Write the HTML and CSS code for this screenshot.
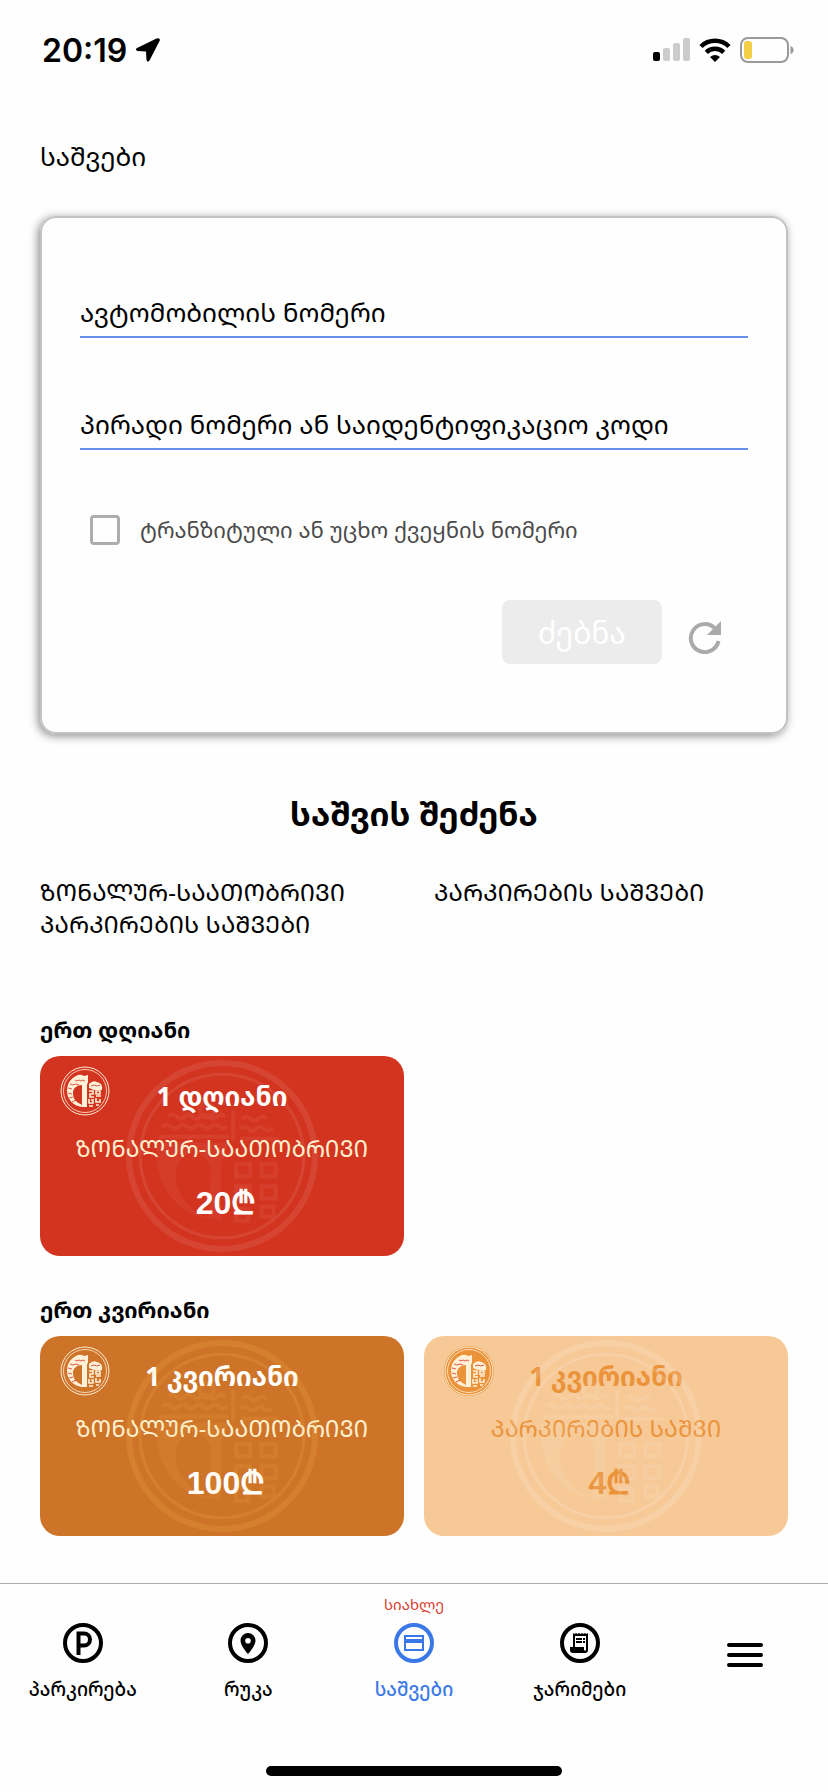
FILE: index.html
```html
<!DOCTYPE html>
<html lang="ka">
<head>
<meta charset="utf-8">
<meta name="viewport" content="width=device-width, initial-scale=1">
<title>საშვები</title>
<link rel="stylesheet" href="styles.css">
</head>
<body>
<svg class="defs" aria-hidden="true">
  <symbol id="emblem" viewBox="0 0 50 50">
    <g fill="none" stroke="currentColor">
      <circle cx="25" cy="25" r="24"/>
      <circle cx="25" cy="25" r="21.500" stroke-width="0.8"/>
    </g>
    <path fill="currentColor" fill-rule="evenodd" d="M16 10q3-2 6-1l2 1 4-1v7l-1 3v22h-5C13 40 7 33 7 25c0-7 3-12 9-15zm6 9c-5 0-9 3-9 8 0 6 3 9 9 12z"/>
    <path fill="currentColor" d="M29 18q4-4 8-2 6 1 5 8h-8l-5-2z"/>
    <path class="carving" fill="none" stroke-width="0.8" d="m15 14 2 1 2-1 2 1 2-1 2 1M10 18l3 1 3-1 3 1M8 22l4 1M8 27l4 1M9 32l4-1M12 36l4-2M31 20l3-1 3 1 3-1"/>
    <path fill="none" stroke="currentColor" stroke-width="1.600" d="M29 25h4v3h-3v3h4M36 25h4v3h-4zM36 30h5M29 33v4h4v-3h-2M36 32v4h4v-3M29 40h4M36 39h3"/>
  </symbol>
  <symbol id="watermark" viewBox="0 0 190 190">
    <g fill="none" stroke="currentColor">
      <circle cx="95" cy="95" r="92" stroke-width="6"/>
      <circle cx="95" cy="95" r="81" stroke-width="3"/>
    </g>
    <g fill="none" stroke="currentColor" stroke-width="4" opacity="0.7">
      <path d="M42 56q4-4 8 0t8 0 8 0 8 0 8 0 8 0 8 0M36 66q4-4 8 0t8 0 8 0 8 0 8 0 8 0 8 0 8 0M32 76h70M115 58q4-4 8 0t8 0 8 0M113 68q4-4 8 0t8 0 8 0 8 0M113 78h38"/>
      <circle cx="80" cy="50" r="7"/>
      <path d="M106 50v30"/>
      <path d="M109 103h14v12h-14zM134 103h14v12h-14zM109 125h14v12h-14zM134 125h14v12h-14zM109 147h12v12h-12zM134 145h12v10h-12z"/>
    </g>
    <path fill="currentColor" fill-rule="evenodd" opacity="0.6" d="M30 82h72l-8 20v56q-40 0-58-36-7-20-6-40zm34 8q-24 16-10 44 12 18 28 22l2-48q-2-14-20-18z"/>
  </symbol>
</svg>
<div class="screen">
  <header class="status">
    <div class="status-time">
      <span>20:19</span>
      <svg width="26" height="26" viewBox="0 0 26 26" aria-hidden="true"><path d="M21.500 1.500 2 11q-2.500 2 .5 3l8.500.5.500 8.500q1 3 3 .5L24.800 3.500q.6-3.200-3.300-2z"/></svg>
    </div>
    <div class="status-icons">
      <svg width="37" height="24" viewBox="0 0 37 24" aria-hidden="true"><rect x="0" y="14" width="7" height="9" rx="2"/><g fill="#cccccc"><rect x="10" y="10" width="7" height="13" rx="2"/><rect x="20" y="5" width="7" height="18" rx="2"/><rect x="30" y="0" width="7" height="23" rx="2"/></g></svg>
      <svg width="32" height="24" viewBox="0 0 32 24" aria-hidden="true"><g fill="none" stroke="#000" stroke-width="4.500"><path d="M2 8.500a20 20 0 0 1 28 0"/><path d="M7.300 14.300a12.500 12.500 0 0 1 17.400 0"/></g><path d="M11 19q5-4 10 0l-5 5z"/></svg>
      <svg width="54" height="26" viewBox="0 0 54 26" aria-hidden="true"><rect x="1" y="1" width="47" height="24" rx="7" fill="none" stroke="#999" stroke-width="2"/><rect x="4" y="4" width="8" height="18" rx="3" fill="#f4ce46"/><path fill="#999" d="M50.500 9q3 1 3 4t-3 4z"/></svg>
    </div>
  </header>

  <main class="content">
    <h1 class="page-title">საშვები</h1>

    <form class="search-card">
      <input class="field" type="text" aria-label="ავტომობილის ნომერი" placeholder="ავტომობილის ნომერი">
      <input class="field" type="text" aria-label="პირადი ნომერი ან საიდენტიფიკაციო კოდი" placeholder="პირადი ნომერი ან საიდენტიფიკაციო კოდი">
      <label class="check"><input type="checkbox"><span>ტრანზიტული ან უცხო ქვეყნის ნომერი</span></label>
      <div class="actions">
        <button class="search" type="submit" disabled>ძებნა</button>
        <button class="reset" type="reset" aria-label="განახლება">
          <svg width="34" height="34" viewBox="0 0 34 34" aria-hidden="true"><path fill="none" stroke="#aaa" stroke-width="4" d="M27 8.500A14 14 0 1 0 30.500 21"/><path fill="#aaa" d="M33 1v14H19z"/></svg>
        </button>
      </div>
    </form>

    <h2 class="buy-title">საშვის შეძენა</h2>
    <div class="kinds">
      <p>ᲖᲝᲜᲐᲚᲣᲠ-ᲡᲐᲐᲗᲝᲑᲠᲘᲕᲘ ᲞᲐᲠᲙᲘᲠᲔᲑᲘᲡ ᲡᲐᲨᲕᲔᲑᲘ</p>
      <p>ᲞᲐᲠᲙᲘᲠᲔᲑᲘᲡ ᲡᲐᲨᲕᲔᲑᲘ</p>
    </div>

    <section class="group">
      <h3 class="group-title">ერთ დღიანი</h3>
      <div class="passes">
        <button class="pass red" type="button">
          <svg class="mark"><use href="#watermark"/></svg>
          <svg class="logo"><use href="#emblem"/></svg>
          <span class="pass-name">1 დღიანი</span>
          <span class="pass-kind">ᲖᲝᲜᲐᲚᲣᲠ-ᲡᲐᲐᲗᲝᲑᲠᲘᲕᲘ</span>
          <span class="pass-price">20₾</span>
        </button>
      </div>
    </section>

    <section class="group">
      <h3 class="group-title">ერთ კვირიანი</h3>
      <div class="passes">
        <button class="pass orange" type="button">
          <svg class="mark"><use href="#watermark"/></svg>
          <svg class="logo"><use href="#emblem"/></svg>
          <span class="pass-name">1 კვირიანი</span>
          <span class="pass-kind">ᲖᲝᲜᲐᲚᲣᲠ-ᲡᲐᲐᲗᲝᲑᲠᲘᲕᲘ</span>
          <span class="pass-price">100₾</span>
        </button>
        <button class="pass peach" type="button">
          <svg class="mark"><use href="#watermark"/></svg>
          <svg class="logo"><use href="#emblem"/></svg>
          <span class="pass-name">1 კვირიანი</span>
          <span class="pass-kind">ᲞᲐᲠᲙᲘᲠᲔᲑᲘᲡ ᲡᲐᲨᲕᲘ</span>
          <span class="pass-price">4₾</span>
        </button>
      </div>
    </section>
  </main>

  <footer class="bottom">
    <nav class="tabs">
      <a class="tab" href="#parking">
        <svg width="40" height="40" viewBox="0 0 40 40" aria-hidden="true"><circle cx="20" cy="20" r="18" fill="none" stroke="currentColor" stroke-width="4"/><path fill="none" stroke="currentColor" stroke-width="4" d="M15.500 32V10.500H21a5.500 5.500 0 0 1 0 12h-5"/></svg>
        <span>პარკირება</span>
      </a>
      <a class="tab" href="#map">
        <svg width="40" height="40" viewBox="0 0 40 40" aria-hidden="true"><circle cx="20" cy="20" r="18" fill="none" stroke="currentColor" stroke-width="4"/><path fill="currentColor" fill-rule="evenodd" d="M20 10a7.500 7.500 0 0 0-7.500 7.500C12.500 23 20 31 20 31s7.500-8 7.500-13.500A7.500 7.500 0 0 0 20 10zm0 5a2.800 2.800 0 1 1 0 5.600 2.800 2.800 0 0 1 0-5.600z"/></svg>
        <span>რუკა</span>
      </a>
      <a class="tab active" href="#passes">
        <small class="news">სიახლე</small>
        <svg width="40" height="40" viewBox="0 0 40 40" aria-hidden="true"><circle cx="20" cy="20" r="18" fill="none" stroke="currentColor" stroke-width="4"/><path fill="none" stroke="currentColor" stroke-width="2" d="M11 13h18v14H11z"/><path fill="currentColor" d="M10 16h20v4H10z"/></svg>
        <span>საშვები</span>
      </a>
      <a class="tab" href="#fines">
        <svg width="40" height="40" viewBox="0 0 40 40" aria-hidden="true"><circle cx="20" cy="20" r="18" fill="none" stroke="currentColor" stroke-width="4"/><path fill="currentColor" fill-rule="evenodd" d="m13 10 1.500 1 1.500-1 1.500 1 1.500-1 1.500 1 1.500-1 1.500 1 1.500-1 1.500 1 1.500-1v17a3 3 0 0 1-3 3H13a3 3 0 0 1-3-3v-3h3zm2 3v11h9v3q1 1.500 2 0V13zm1 2h6v2h-6zm7 0h2v2h-2zm-7 3h6v2h-6zm7 0h2v2h-2z"/></svg>
        <span>ჯარიმები</span>
      </a>
      <button class="tab menu" type="button" aria-label="მენიუ">
        <svg width="36" height="24" viewBox="0 0 36 24" aria-hidden="true"><path stroke="currentColor" stroke-width="4" stroke-linecap="round" d="M2 2h32M2 12h32M2 22h32"/></svg>
      </button>
    </nav>
    <div class="home-bar"></div>
  </footer>
</div>
</body>
</html>
```
FILE: styles.css
```css
* { box-sizing: border-box; }

body {
  margin: 0;
  background: #fefefe;
  color: #000;
  font-family: "Noto Sans Georgian", "DejaVu Sans Condensed", "DejaVu Sans", sans-serif;
}

h1, h2, h3, p { margin: 0; }
button, input { font: inherit; color: inherit; }
svg { flex: none; }

.defs { position: absolute; width: 0; height: 0; }

.screen {
  display: flex;
  flex-direction: column;
  min-height: 100vh;
}

.status {
  display: flex;
  align-items: center;
  justify-content: space-between;
  height: 100px;
  padding: 0 34px 0 42px;
}
.status-time {
  display: flex;
  align-items: center;
  gap: 8px;
  font: 600 32px Inter, sans-serif;
}
.status-icons { display: flex; align-items: center; gap: 9px; }

.content { flex: 1; padding: 36px 40px 0; }

.page-title { font-size: 26px; font-weight: 400; line-height: 40px; }

.search-card {
  display: flex;
  flex-direction: column;
  margin-top: 40px;
  padding: 70px 38px 68px;
  border: 2px solid #c2c2c2;
  border-radius: 16px;
  box-shadow: -2px 2px 10px rgba(0, 0, 0, 0.45);
}
.field {
  width: 100%;
  height: 50px;
  padding: 0;
  border: 0;
  border-bottom: 2px solid #6490ea;
  border-radius: 0;
  background: none;
  font-size: 26px;
}
.field + .field { margin-top: 62px; }
.field::placeholder { color: #000; opacity: 1; }

.check {
  display: flex;
  align-items: center;
  gap: 20px;
  margin-top: 60px;
  padding-left: 10px;
  color: #4a4a4a;
  font-size: 22px;
  line-height: 40px;
}
.check input {
  appearance: none;
  width: 30px;
  height: 30px;
  margin: 0;
  border: 3px solid #adadad;
  border-radius: 4px;
}

.actions {
  display: flex;
  justify-content: flex-end;
  gap: 26px;
  margin-top: 50px;
  padding-right: 26px;
}
.search {
  width: 160px;
  height: 64px;
  padding: 0;
  border: 0;
  border-radius: 8px;
  background: #ececec;
  color: #fff;
  font-size: 30px;
}
.reset {
  display: flex;
  align-items: center;
  padding: 10px 0 0;
  border: 0;
  background: none;
}

.buy-title {
  margin-top: 58px;
  font-size: 33px;
  font-weight: 700;
  line-height: 44px;
  text-align: center;
}

.kinds {
  display: grid;
  grid-template-columns: 1fr 1fr;
  gap: 40px;
  margin-top: 40px;
  font-size: 24px;
  line-height: 32px;
}

.group { margin-top: 38px; }
.kinds + .group { margin-top: 74px; }
.group-title { font-size: 22px; font-weight: 700; line-height: 32px; }

.passes {
  display: grid;
  grid-template-columns: 1fr 1fr;
  gap: 20px;
  margin-top: 10px;
}
.pass {
  position: relative;
  display: flex;
  flex-direction: column;
  align-items: center;
  height: 200px;
  padding: 20px 0 0;
  border: 0;
  border-radius: 20px;
  color: #fff;
}
.red { background: #d33420; }
.orange { background: #ce7429; }
.peach { background: #f6c996; color: #eb933b; }

.mark {
  position: absolute;
  top: 4px;
  left: calc(50% - 96px);
  width: 192px;
  height: 192px;
  opacity: 0.08;
}
.orange .mark { color: #ffc850; opacity: 0.14; }
.peach .mark { color: #fff; opacity: 0.14; }
.logo {
  position: absolute;
  top: 10px;
  left: 20px;
  width: 50px;
  height: 50px;
  border-radius: 50%;
  color: #fff0d8;
}
.peach .logo { background: #eb933b; }
.carving { stroke: #d33420; }
.orange .carving, .peach .carving { stroke: #e08a35; }

.pass-name { font-size: 26px; font-weight: 700; line-height: 40px; }
.pass-kind { margin-top: 14px; font-size: 23px; line-height: 36px; }
.red .pass-kind, .orange .pass-kind { color: #fff0d0; }
.pass-price {
  margin-top: 17px;
  padding-left: 8px;
  font: 700 32px/40px "Liberation Sans", "DejaVu Sans", sans-serif;
}

.bottom { border-top: 1px solid #adadad; }
.tabs {
  display: grid;
  grid-template-columns: repeat(5, 1fr);
  padding-top: 39px;
}
.tab {
  position: relative;
  display: flex;
  flex-direction: column;
  align-items: center;
  gap: 10px;
  color: #000;
  font-size: 19px;
  font-weight: 500;
  line-height: 32px;
  text-decoration: none;
}
.tab.active { color: #3b78e7; }
.news {
  position: absolute;
  top: -29px;
  color: #d9402e;
  font-size: 15px;
  font-weight: 400;
  line-height: 20px;
}
.menu { padding: 20px 0 0; border: 0; background: none; }
.home-bar {
  width: 296px;
  height: 10px;
  margin: 61px auto 16px;
  border-radius: 5px;
  background: #000;
}
```
